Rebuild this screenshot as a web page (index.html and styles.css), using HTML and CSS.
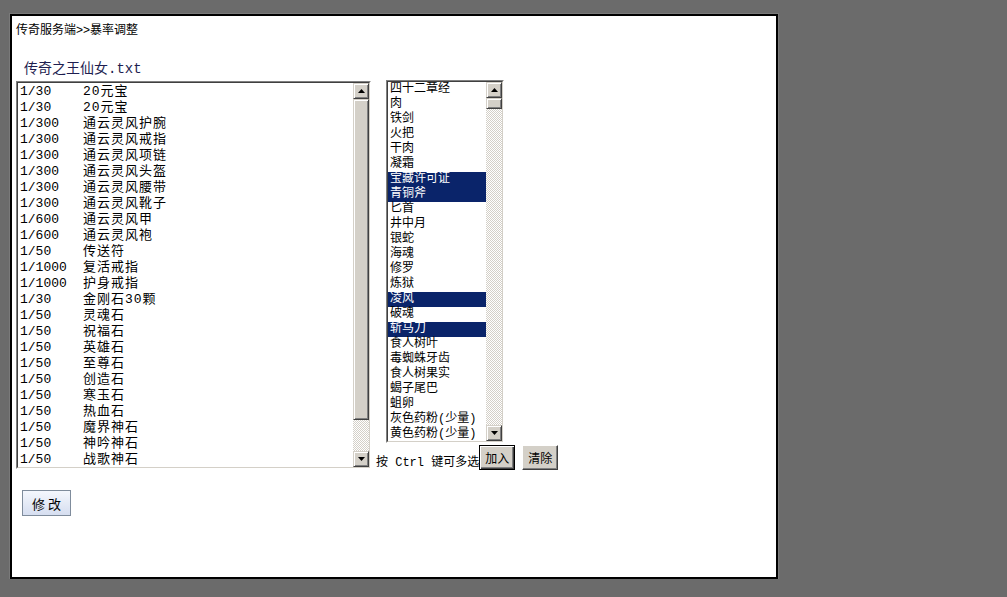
FILE: index.html
```html
<!DOCTYPE html>
<html lang="zh-CN">
<head>
    <meta charset="UTF-8">
    <title>暴率调整</title>
    <link rel="stylesheet" href="styles.css">
</head>
<body>
    <div class="panel">
        <div class="crumb">传奇服务端&gt;&gt;暴率调整</div>
        <div class="filename">传奇之王仙女.txt</div>

        <div class="editor">
            <div class="field field-drops">
                <div class="field-in">
                    <div class="lines">
                        <div class="line"><span class="rate">1/30</span><span class="name">20元宝</span></div>
                        <div class="line"><span class="rate">1/30</span><span class="name">20元宝</span></div>
                        <div class="line"><span class="rate">1/300</span><span class="name">通云灵风护腕</span></div>
                        <div class="line"><span class="rate">1/300</span><span class="name">通云灵风戒指</span></div>
                        <div class="line"><span class="rate">1/300</span><span class="name">通云灵风项链</span></div>
                        <div class="line"><span class="rate">1/300</span><span class="name">通云灵风头盔</span></div>
                        <div class="line"><span class="rate">1/300</span><span class="name">通云灵风腰带</span></div>
                        <div class="line"><span class="rate">1/300</span><span class="name">通云灵风靴子</span></div>
                        <div class="line"><span class="rate">1/600</span><span class="name">通云灵风甲</span></div>
                        <div class="line"><span class="rate">1/600</span><span class="name">通云灵风袍</span></div>
                        <div class="line"><span class="rate">1/50</span><span class="name">传送符</span></div>
                        <div class="line"><span class="rate">1/1000</span><span class="name">复活戒指</span></div>
                        <div class="line"><span class="rate">1/1000</span><span class="name">护身戒指</span></div>
                        <div class="line"><span class="rate">1/30</span><span class="name">金刚石30颗</span></div>
                        <div class="line"><span class="rate">1/50</span><span class="name">灵魂石</span></div>
                        <div class="line"><span class="rate">1/50</span><span class="name">祝福石</span></div>
                        <div class="line"><span class="rate">1/50</span><span class="name">英雄石</span></div>
                        <div class="line"><span class="rate">1/50</span><span class="name">至尊石</span></div>
                        <div class="line"><span class="rate">1/50</span><span class="name">创造石</span></div>
                        <div class="line"><span class="rate">1/50</span><span class="name">寒玉石</span></div>
                        <div class="line"><span class="rate">1/50</span><span class="name">热血石</span></div>
                        <div class="line"><span class="rate">1/50</span><span class="name">魔界神石</span></div>
                        <div class="line"><span class="rate">1/50</span><span class="name">神吟神石</span></div>
                        <div class="line"><span class="rate">1/50</span><span class="name">战歌神石</span></div>
                    </div>
                    <div class="vscroll">
                        <div class="sb-btn"><svg width="7" height="4" viewBox="0 0 7 4"><path d="M3.5 0L7 4H0z" fill="#000"/></svg></div>
                        <div class="sb-thumb thumb-drops"></div>
                        <div class="sb-track"></div>
                        <div class="sb-btn"><svg width="7" height="4" viewBox="0 0 7 4"><path d="M0 0H7L3.5 4z" fill="#000"/></svg></div>
                    </div>
                </div>
            </div>

            <div class="picker">
                <div class="field field-items">
                    <div class="field-in">
                        <div class="options">
                            <div class="opt">四十二章经</div>
                            <div class="opt">肉</div>
                            <div class="opt">铁剑</div>
                            <div class="opt">火把</div>
                            <div class="opt">干肉</div>
                            <div class="opt">凝霜</div>
                            <div class="opt selected">宝藏许可证</div>
                            <div class="opt selected">青铜斧</div>
                            <div class="opt">匕首</div>
                            <div class="opt">井中月</div>
                            <div class="opt">银蛇</div>
                            <div class="opt">海魂</div>
                            <div class="opt">修罗</div>
                            <div class="opt">炼狱</div>
                            <div class="opt selected">凌风</div>
                            <div class="opt">破魂</div>
                            <div class="opt selected">斩马刀</div>
                            <div class="opt">食人树叶</div>
                            <div class="opt">毒蜘蛛牙齿</div>
                            <div class="opt">食人树果实</div>
                            <div class="opt">蝎子尾巴</div>
                            <div class="opt">蛆卵</div>
                            <div class="opt">灰色药粉(少量)</div>
                            <div class="opt">黄色药粉(少量)</div>
                        </div>
                        <div class="vscroll">
                            <div class="sb-btn"><svg width="7" height="4" viewBox="0 0 7 4"><path d="M3.5 0L7 4H0z" fill="#000"/></svg></div>
                            <div class="sb-thumb thumb-items"></div>
                            <div class="sb-track"></div>
                            <div class="sb-btn"><svg width="7" height="4" viewBox="0 0 7 4"><path d="M0 0H7L3.5 4z" fill="#000"/></svg></div>
                        </div>
                    </div>
                </div>
                <div class="picker-actions">
                    <span class="hint">按 Ctrl 键可多选</span>
                    <button class="btn btn-default">加入</button>
                    <button class="btn">清除</button>
                </div>
            </div>
        </div>

        <button class="btn-submit">修 改</button>
    </div>
</body>
</html>
```

FILE: styles.css
```css
body {
    margin: 0;
    background: #6b6b6b;
    font-family: "Liberation Mono", "Noto Sans CJK SC", monospace;
    font-size: 12px;
    color: #000;
}
.panel {
    box-sizing: border-box;
    width: 768px;
    height: 565px;
    margin: 14px 0 0 10px;
    padding: 7px 4px 6px;
    background: #fff;
    border: 2px solid #000;
    box-shadow: 0 0 0 1px #7a7a7a;
}
.crumb {
    font-family: "Liberation Sans", "Noto Sans CJK SC", sans-serif;
    font-size: 12px;
    line-height: 14px;
}
.filename {
    margin: 24px 0 4px 8px;
    font-size: 14px;
    line-height: 16px;
    color: #1e1e50;
}
.editor {
    display: flex;
    align-items: flex-start;
}

/* sunken 3d boxes */
.field {
    box-sizing: border-box;
    border: 1px solid;
    border-color: #808080 #fff #fff #808080;
    background: #fff;
}
.field-in {
    box-sizing: border-box;
    height: 100%;
    display: flex;
    border: 1px solid;
    border-color: #404040 #d4d0c8 #d4d0c8 #404040;
}
.field-drops {
    width: 355px;
    height: 388px;
}
.field-items {
    width: 118px;
    height: 363px;
}

.lines {
    flex: 1;
    overflow: hidden;
    padding: 1px 2px 0;
}
.line {
    height: 16px;
    line-height: 16px;
    font-size: 13px;
    white-space: nowrap;
}
.rate {
    display: inline-block;
    width: 63px;
}
.name {
    letter-spacing: 1px;
}

.options {
    flex: 1;
    overflow: hidden;
}
.opt {
    height: 15px;
    line-height: 15px;
    padding-left: 2px;
    font-size: 12px;
    white-space: nowrap;
}
.opt.selected {
    background: #0a246a;
    color: #fff;
}

/* classic scrollbar */
.vscroll {
    width: 16px;
    display: flex;
    flex-direction: column;
}
.sb-btn, .sb-thumb {
    box-sizing: border-box;
    background: #d4d0c8;
    border: 1px solid;
    border-color: #d4d0c8 #404040 #404040 #d4d0c8;
    box-shadow: inset 1px 1px #fff, inset -1px -1px #808080;
}
.sb-btn {
    height: 16px;
    display: flex;
    align-items: center;
    justify-content: center;
}
.sb-btn svg { display: block; }
.sb-track {
    flex: 1;
    background: repeating-conic-gradient(#d4d0c8 0 25%, #fff 0 50%) 0 0 / 2px 2px;
}
.thumb-drops { height: 321px; }
.thumb-items { height: 11px; }

.picker {
    margin-left: 5px;
    margin-top: -1px;
}
.picker .field {
    margin-left: 10px;
}
.picker-actions {
    display: flex;
    align-items: flex-end;
    margin-top: 2px;
}
.hint {
    font-size: 12px;
    line-height: 14px;
}
.btn {
    box-sizing: border-box;
    width: 36px;
    height: 25px;
    padding: 0;
    margin-left: 7px;
    font-family: "Noto Sans CJK SC", sans-serif;
    font-size: 12px;
    background: #d4d0c8;
    border: 1px solid;
    border-color: #fff #404040 #404040 #fff;
    box-shadow: inset -1px -1px #808080;
}
.btn-default {
    margin-left: 0;
    border-color: #000;
    box-shadow: inset 1px 1px #fff, inset -1px -1px #404040, inset -2px -2px #808080;
}
.btn-submit {
    display: block;
    box-sizing: border-box;
    width: 49px;
    height: 26px;
    margin: 20px 0 0 6px;
    padding: 0;
    font-family: "Noto Sans CJK SC", sans-serif;
    font-size: 13px;
    color: #000;
    background: linear-gradient(#f4f7fd, #d6def0);
    border: 1px solid #7f8c9c;
}
```
